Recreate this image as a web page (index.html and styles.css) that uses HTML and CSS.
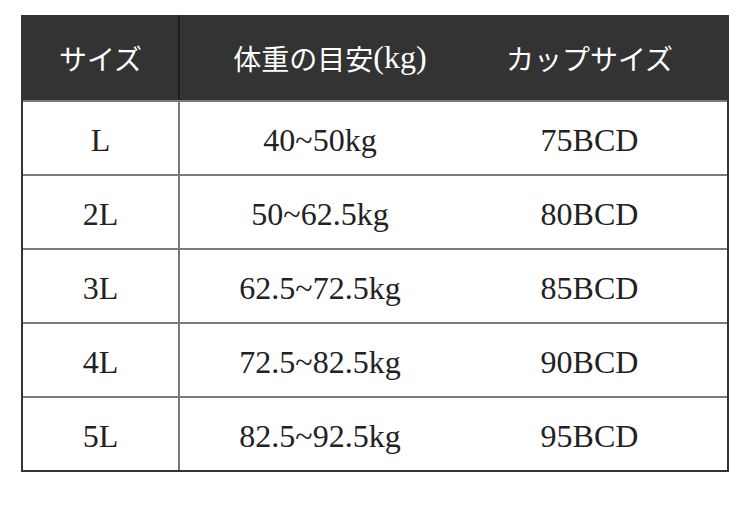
FILE: index.html
```html
<!DOCTYPE html>
<html lang="ja">
<head>
<meta charset="utf-8">
<title>サイズ表</title>
<link rel="stylesheet" href="styles.css">
</head>
<body>
<div class="table">
  <div class="row head">
    <div class="cell c1">サイズ</div>
    <div class="cell c2">体重の目安<span class="unit">(kg)</span></div>
    <div class="cell c3">カップサイズ</div>
  </div>
  <div class="row">
    <div class="cell c1">L</div>
    <div class="cell c2">40~50kg</div>
    <div class="cell c3">75BCD</div>
  </div>
  <div class="row">
    <div class="cell c1">2L</div>
    <div class="cell c2">50~62.5kg</div>
    <div class="cell c3">80BCD</div>
  </div>
  <div class="row">
    <div class="cell c1">3L</div>
    <div class="cell c2">62.5~72.5kg</div>
    <div class="cell c3">85BCD</div>
  </div>
  <div class="row">
    <div class="cell c1">4L</div>
    <div class="cell c2">72.5~82.5kg</div>
    <div class="cell c3">90BCD</div>
  </div>
  <div class="row">
    <div class="cell c1">5L</div>
    <div class="cell c2">82.5~92.5kg</div>
    <div class="cell c3">95BCD</div>
  </div>
</div>
</body>
</html>
```
FILE: styles.css
```css
html, body {
  margin: 0;
  padding: 0;
  background: #ffffff;
}
body {
  padding: 15px 0 0 21px;
  font-family: "Liberation Serif", "Noto Sans CJK JP", serif;
  color: #222222;
}
.table {
  width: 708px;
  box-sizing: border-box;
  border-left: 2px solid #333333;
  border-right: 2px solid #333333;
  border-bottom: 2px solid #333333;
  display: flex;
  flex-direction: column;
}
.row {
  display: grid;
  grid-template-columns: 157px 280px 1fr;
  height: 74px;
  border-top: 2px solid #7a7a7a;
  box-sizing: border-box;
}
.row.head {
  height: 85px;
  border-top: none;
  background: #333333;
  color: #ffffff;
}
.cell {
  display: flex;
  align-items: center;
  justify-content: center;
  font-size: 32px;
  padding-top: 4px;
}
.head .cell {
  font-size: 28px;
  padding-top: 0;
}
.head .c2 {
  padding-left: 20px;
}
.head .unit {
  font-size: 32px;
}
.c1 {
  border-right: 2px solid #7a7a7a;
}
.c3 {
  padding-right: 8px;
}
.head .c1 {
  border-right: 2px solid #1f1f1f;
}
```
